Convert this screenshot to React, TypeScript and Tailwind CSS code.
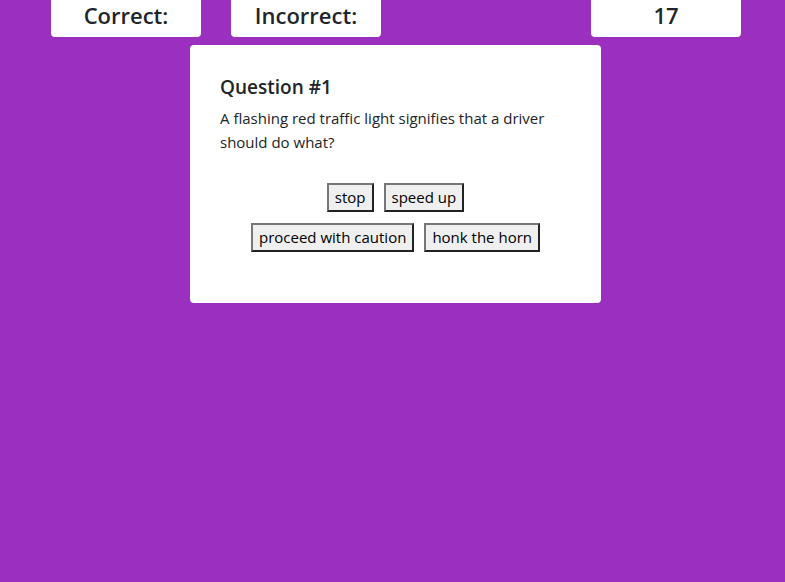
import React from "react";

const ScoreBox: React.FC<{ label?: string }> = ({ label }) => (
  <div className="h-[37px] pb-[6px] bg-white rounded-b-[4px] flex items-center justify-center text-[22px] font-semibold text-[#212529]">
    {label}
  </div>
);

const AnswerButton: React.FC<{ text: string }> = ({ text }) => (
  <button className="h-[29px] px-[6px] bg-[#efefef] text-[15px] text-black border-2 border-t-[#767676] border-l-[#767676] border-b-[#222] border-r-[#222] leading-none">
    {text}
  </button>
);

export default function App() {
  return (
    <div
      className="min-h-[582px] w-full bg-[#9b2fbf] text-[#212529]"
      style={{ fontFamily: '"Segoe UI", "Open Sans", "Noto Sans", sans-serif' }}
    >
      <div className="pl-[51px] grid grid-cols-[150px_150px_150px_150px] gap-x-[30px]">
        <ScoreBox label="Correct:" />
        <ScoreBox label="Incorrect:" />
        <div />
        <ScoreBox label="17" />
      </div>
      <div className="ml-[190px] mt-[8px] w-[411px] bg-white rounded-[4px] px-[30px] pt-[30px] pb-[51px]">
        <h5 className="text-[19px] font-semibold leading-[24px] mb-[7px]">Question #1</h5>
        <p className="text-[15px] leading-[24px]">
          A flashing red traffic light signifies that a driver should do what?
        </p>
        <div className="mt-[29px] flex flex-col items-center gap-[11px]">
          <div className="flex gap-[10px]">
            <AnswerButton text="stop" />
            <AnswerButton text="speed up" />
          </div>
          <div className="flex gap-[10px]">
            <AnswerButton text="proceed with caution" />
            <AnswerButton text="honk the horn" />
          </div>
        </div>
      </div>
    </div>
  );
}
